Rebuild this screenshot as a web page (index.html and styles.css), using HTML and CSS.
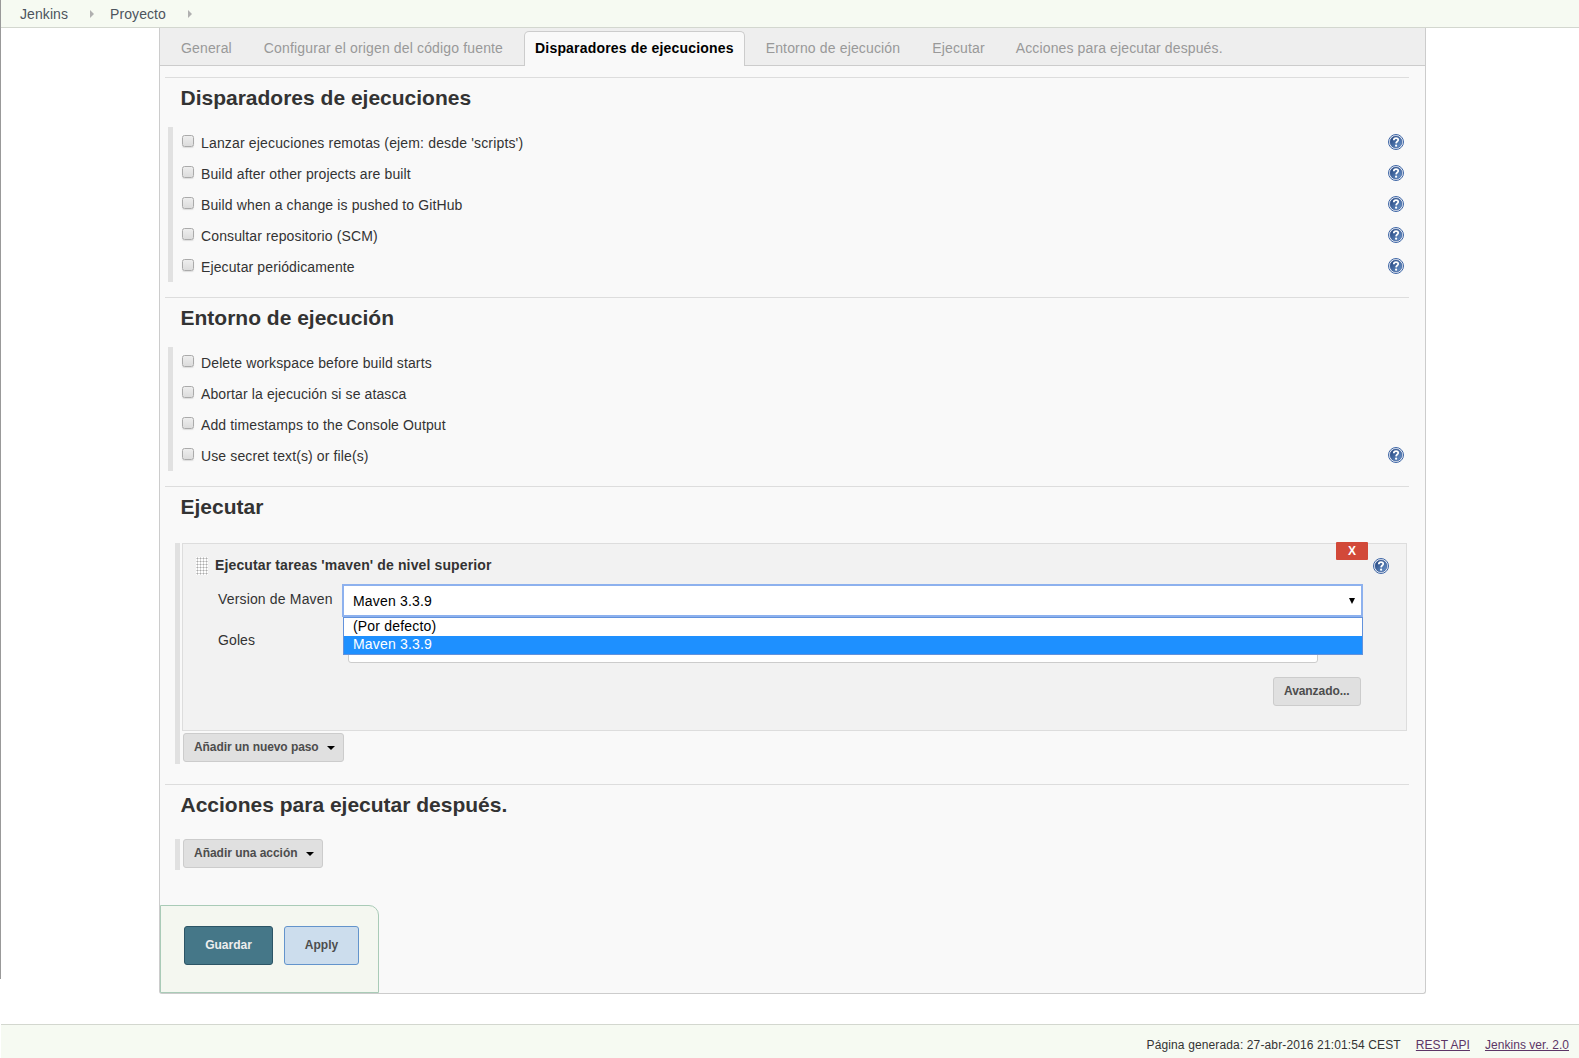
FILE: index.html
```html
<!DOCTYPE html>
<html lang="es">
<head>
<meta charset="utf-8">
<title>Proyecto Config [Jenkins]</title>
<link rel="stylesheet" href="styles.css">
</head>
<body>
<svg class="defs" width="0" height="0">
  <defs>
    <linearGradient id="blue" x1="0" y1="0" x2="1" y2="1"><stop offset="0" stop-color="#1f4079"/><stop offset="1" stop-color="#6f9ad0"/></linearGradient>
    <symbol id="help" viewBox="0 0 16 16">
      <circle cx="8" cy="8" r="7.5" fill="#fff" stroke="#3d65a5"/>
      <circle cx="8" cy="8" r="6" fill="url(#blue)" stroke="#2f5292" stroke-width=".6"/>
      <path d="M5.8 6.2C5.8 3.4 10.3 3.5 10.2 6C10.1 7.6 8.2 7.5 8.1 9.4" fill="none" stroke="#fff" stroke-width="1.8"/>
      <circle cx="8.1" cy="11.7" r="1.1" fill="#fff"/>
    </symbol>
  </defs>
</svg>
<header class="breadcrumbs">
  <a>Jenkins</a><i class="crumb-arrow"></i><a>Proyecto</a><i class="crumb-arrow"></i>
</header>
<main class="panel">
  <nav class="tabs">
    <a class="tab">General</a>
    <a class="tab">Configurar el origen del código fuente</a>
    <a class="tab active">Disparadores de ejecuciones</a>
    <a class="tab">Entorno de ejecución</a>
    <a class="tab">Ejecutar</a>
    <a class="tab last">Acciones para ejecutar después.</a>
  </nav>
  <section class="section first">
    <h2>Disparadores de ejecuciones</h2>
    <div class="options">
      <div class="row wide"><i class="check"></i><label>Lanzar ejecuciones remotas (ejem: desde 'scripts')</label><svg class="help"><use href="#help"/></svg></div>
      <div class="row"><i class="check"></i><label>Build after other projects are built</label><svg class="help"><use href="#help"/></svg></div>
      <div class="row"><i class="check"></i><label>Build when a change is pushed to GitHub</label><svg class="help"><use href="#help"/></svg></div>
      <div class="row"><i class="check"></i><label>Consultar repositorio (SCM)</label><svg class="help"><use href="#help"/></svg></div>
      <div class="row"><i class="check"></i><label>Ejecutar periódicamente</label><svg class="help"><use href="#help"/></svg></div>
    </div>
  </section>
  <section class="section">
    <h2>Entorno de ejecución</h2>
    <div class="options">
      <div class="row"><i class="check"></i><label>Delete workspace before build starts</label></div>
      <div class="row"><i class="check"></i><label>Abortar la ejecución si se atasca</label></div>
      <div class="row"><i class="check"></i><label>Add timestamps to the Console Output</label></div>
      <div class="row"><i class="check"></i><label>Use secret text(s) or file(s)</label><svg class="help"><use href="#help"/></svg></div>
    </div>
  </section>
  <section class="section build">
    <h2>Ejecutar</h2>
    <div class="steps">
      <div class="builder">
        <button class="delete">X</button>
        <div class="builder-title"><i class="grip"></i><b>Ejecutar tareas 'maven' de nivel superior</b><svg class="help"><use href="#help"/></svg></div>
        <div class="field">
          <span class="name">Version de Maven</span>
          <div class="select"><span>Maven 3.3.9</span><svg width="6" height="6"><path d="M0 0h6L3 6z"/></svg>
            <div class="menu"><div>(Por defecto)</div><div class="selected">Maven 3.3.9</div></div>
          </div>
        </div>
        <div class="field goals"><span class="name">Goles</span><div class="input"></div></div>
        <div class="advanced"><button class="btn">Avanzado...</button></div>
      </div>
      <button class="btn">Añadir un nuevo paso<svg width="8" height="4"><path d="M0 0h8L4 4z"/></svg></button>
    </div>
  </section>
  <section class="section post">
    <h2>Acciones para ejecutar después.</h2>
    <div class="steps">
      <button class="btn">Añadir una acción<svg width="8" height="4"><path d="M0 0h8L4 4z"/></svg></button>
    </div>
  </section>
  <div class="save-bar"><button class="save">Guardar</button><button class="apply">Apply</button></div>
</main>
<footer class="footer"><span>Página generada: 27-abr-2016 21:01:54 CEST</span><a>REST API</a><a>Jenkins ver. 2.0</a></footer>
<div class="edge"></div>
</body>
</html>
```
FILE: styles.css
```css
* { box-sizing: border-box; }
body {
  margin: 0;
  height: 1058px;
  display: flex;
  flex-direction: column;
  position: relative;
  overflow: hidden;
  background: #fff;
  color: #333;
  font: 14px/18px "Liberation Sans", Arial, sans-serif;
  letter-spacing: .13px;
}
button { font-family: inherit; margin: 0; padding: 0; }
.defs { position: absolute; }
.edge { position: absolute; left: 0; top: 0; width: 1px; height: 979px; background: #999; }

.breadcrumbs {
  height: 28px;
  display: flex;
  align-items: center;
  padding: 0 0 0 20px;
  background: #f6faf2;
  border-bottom: 1px solid #d3d7cf;
  color: #4d545d;
  letter-spacing: .08px;
}
.crumb-arrow {
  margin: 1px 16px 0 22px;
  border: solid transparent;
  border-width: 4px 0 4px 4px;
  border-left-color: #b0b0b0;
}

.panel {
  width: 1267px;
  height: 966px;
  margin-left: 159px;
  display: flex;
  flex-direction: column;
  background: #f9f9f9;
  border: 1px solid #ccc;
  border-top: 0;
  border-radius: 0 0 3px 3px;
}
.tabs {
  height: 38px;
  display: flex;
  gap: 10px;
  padding: 3px 0 0 10px;
  background: #eee;
  border-bottom: 1px solid #ccc;
  color: #999;
  letter-spacing: .15px;
}
.tab {
  height: 35px;
  padding: 0 10px;
  border: 1px solid transparent;
  border-bottom: 0;
  border-radius: 5px 5px 0 0;
  line-height: 33px;
  white-space: nowrap;
}
.tab.active { background: #f9f9f9; border-color: #ccc; color: #000; font-weight: bold; letter-spacing: .18px; }
.tab.last { margin-left: -1px; letter-spacing: .12px; }

.section { width: 1244px; margin: 15px 0 0 5px; border-top: 1px solid #ddd; }
.section.first { margin-top: 11px; }
h2 { margin: 0 0 0 15.5px; height: 49px; font-size: 21px; line-height: 40px; letter-spacing: 0; }
.options { margin-left: 3px; border-left: 5px solid #e1e1e1; }
.row { height: 31px; display: flex; padding: 0 5px 0 9px; }
.row label { line-height: 32px; margin-left: 7px; white-space: nowrap; letter-spacing: .12px; }
.row.wide label { letter-spacing: .16px; }
.check {
  width: 12px;
  height: 12px;
  margin: 8px 0 0;
  border: 1px solid #aaa;
  border-radius: 2.5px;
  background: linear-gradient(#eee, #dcdcdc);
  box-shadow: 0 1px 1px #ddd;
}
.help { width: 16px; height: 16px; margin: 7px 0 0 auto; }

.build h2 { height: 56px; }
.steps { margin-left: 10px; padding-left: 2px; border-left: 5px solid #e1e1e1; }
.build .steps { height: 221px; }
.builder {
  position: relative;
  width: 1225px;
  height: 188px;
  margin-bottom: 2px;
  padding: 12px 17px 0 12px;
  background: #f2f2f2;
  border: 1px solid #ddd;
}
.delete {
  position: absolute;
  right: 38px;
  top: -2px;
  width: 32px;
  height: 18px;
  border: 0;
  border-radius: 1px;
  background: #d24939;
  color: #fff;
  font-size: 12px;
  font-weight: bold;
}
.builder-title { display: flex; height: 28px; }
.builder-title b { margin-left: 7px; line-height: 18px; letter-spacing: .13px; }
.builder-title .help { margin-top: 2px; }
.grip {
  width: 12px;
  height: 18px;
  margin: 1px 0 0 1px;
  background: radial-gradient(circle at 1.5px 1.5px, #aaa 0 .8px, #fff 1.2px) 0 0 / 3px 3px;
}
.field { display: flex; margin-left: 23px; height: 33px; }
.name { width: 125px; line-height: 30px; letter-spacing: .16px; }
.goals .name { letter-spacing: .1px; }
.select {
  position: relative;
  width: 1021px;
  height: 33px;
  margin-left: -1px;
  display: flex;
  align-items: center;
  justify-content: space-between;
  padding: 0 6px 0 9px;
  background: #fff;
  border: 2px solid #8db1ee;
  color: #000;
  letter-spacing: .18px;
}
.menu {
  position: absolute;
  left: -1px;
  right: -2px;
  top: 31px;
  height: 38px;
  background: #fff;
  border: 1px solid #6292dc;
}
.menu div { height: 18px; padding-left: 9px; line-height: 17px; }
.menu .selected { height: 18px; background: #1e90ff; color: #fff; line-height: 17px; }
.goals { height: 45px; margin-top: 8px; }
.input { width: 970px; height: 33px; margin: 5px 0 0 5px; background: #fff; border: 1px solid #ccc; border-radius: 3px; }
.goals .name { line-height: 30px; }
.advanced { display: flex; justify-content: flex-end; padding-right: 28px; margin-top: 7px; }
.advanced .btn { width: 88px; }
.btn {
  height: 29px;
  display: flex;
  align-items: center;
  padding: 0 9.5px 1px 10px;
  margin-left: 1px;
  background: #e0e0e0;
  border: 1px solid #ccc;
  border-radius: 3px;
  color: #4d4d4d;
  font-size: 12px;
  font-weight: bold;
  letter-spacing: -.07px;
}
.btn svg { margin: 2px -2px 0 8.5px; }
.post { margin-top: 20px; }
.post h2 { height: 54px; }
.post .steps { height: 31px; }
.post .btn { letter-spacing: -.03px; }

.save-bar {
  width: 219px;
  height: 88px;
  margin-top: auto;
  display: flex;
  gap: 11px;
  padding: 20px 0 0 23px;
  background: #f4f7f0;
  border: 1px solid #a9cbb7;
  border-radius: 0 10px 0 0;
}
.save, .apply {
  width: 89px;
  height: 39px;
  padding-bottom: 1px;
  background: #457788;
  border: 1px solid #2c5566;
  border-radius: 3px;
  color: #eee;
  font-size: 12px;
  font-weight: bold;
}
.apply { width: 75px; background: #ccdded; border-color: #6394cc; color: #4d4d4d; }

.footer {
  height: 34px;
  margin-top: 30px;
  display: flex;
  justify-content: flex-end;
  flex: 1;
  gap: 15px;
  padding: 11px 10px 0 0;
  background: #f6faf2;
  border-top: 1px solid #d3d7cf;
  margin-left: 1px;
  font-size: 12px;
}
.footer a { color: #5c3566; text-decoration: underline; letter-spacing: .04px; }
```
